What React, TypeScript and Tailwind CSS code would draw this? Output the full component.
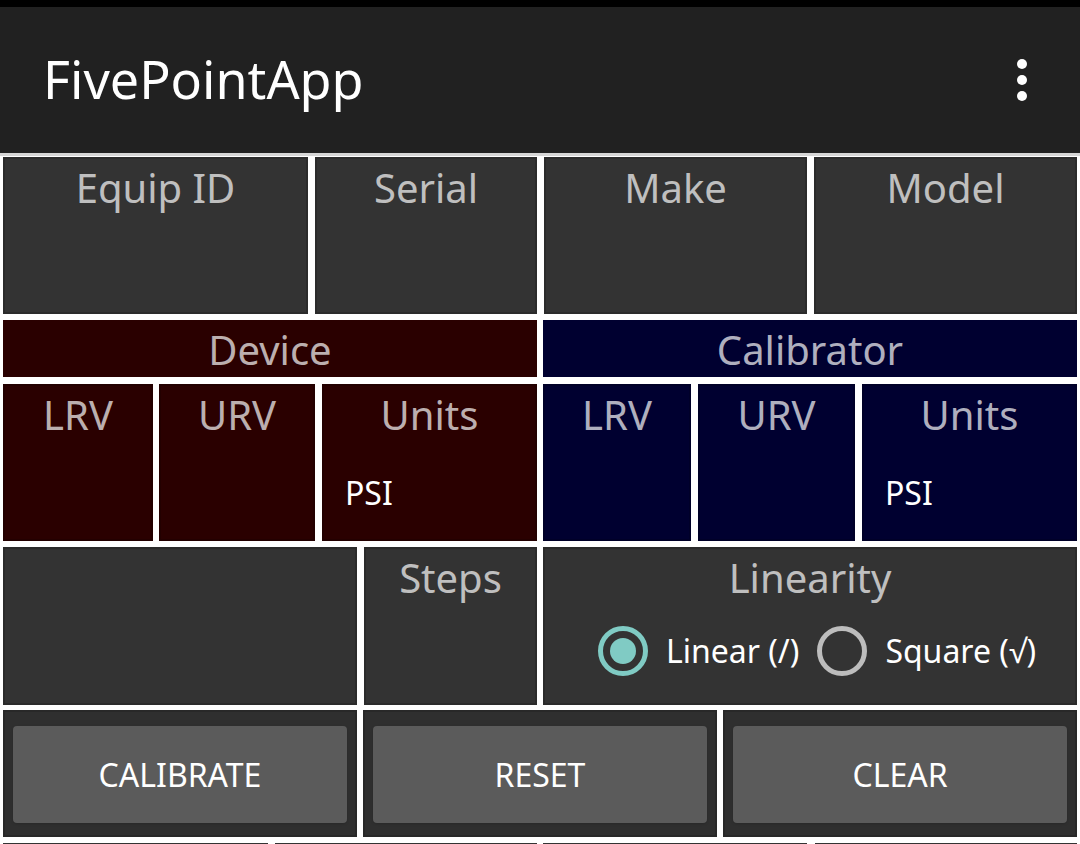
import React from "react";

const font = { fontFamily: '"Noto Sans", "Open Sans", sans-serif' };

const Cell = ({ label, className, value }: { label?: string; className: string; value?: string }) => (
  <div className={`flex flex-col border-2 border-black/15 ${className}`}>
    {label && <div className="pt-[5px] text-center text-[40px] leading-[48px] text-white/70">{label}</div>}
    {value && <div className="mt-[34px] pl-[21px] text-[32px] leading-[40px] text-white">{value}</div>}
  </div>
);

const Radio = ({ checked, label }: { checked?: boolean; label: string }) => (
  <div className="flex items-center">
    <div
      className={`flex h-[50px] w-[50px] items-center justify-center rounded-full border-[5px] ${
        checked ? "border-[#80cbc4]" : "border-[#bdbdbd]"
      }`}
    >
      {checked && <div className="h-[26px] w-[26px] rounded-full bg-[#80cbc4]" />}
    </div>
    <span className="ml-[18px] text-[32px] leading-[40px] text-white">{label}</span>
  </div>
);

const Button = ({ text }: { text: string }) => (
  <div className="flex flex-1 bg-[#2f2f2f] border-2 border-black/15 px-[8px] pt-[14px] pb-[12px]">
    <button className="flex-1 rounded-[4px] bg-[#5b5b5b] text-[32px] text-white shadow-sm">{text}</button>
  </div>
);

export default function App() {
  return (
    <div className="h-[844px] w-[1080px] overflow-hidden bg-white" style={font}>
      <div className="h-[7px] bg-black" />
      <div className="flex h-[146px] items-center justify-between bg-[#212121] pl-[43px] pr-[53px]">
        <h1 className="pb-[2px] text-[52px] leading-[60px] text-white">FivePointApp</h1>
        <div className="flex flex-col gap-[6px]">
          <span className="h-[10px] w-[10px] rounded-full bg-white" />
          <span className="h-[10px] w-[10px] rounded-full bg-white" />
          <span className="h-[10px] w-[10px] rounded-full bg-white" />
        </div>
      </div>
      <div className="h-[3px] bg-[#d6d6d6]" />

      <div className="flex flex-col pt-[1px] pl-[3px] pr-[3px]">
        <div className="flex h-[157px] gap-[7px]">
          <Cell label="Equip ID" className="w-[305px] bg-[#333333]" />
          <Cell label="Serial" className="w-[222px] bg-[#333333]" />
          <Cell label="Make" className="w-[263px] bg-[#333333]" />
          <Cell label="Model" className="flex-1 bg-[#333333]" />
        </div>

        <div className="mt-[6px] flex h-[57px] gap-[6px]">
          <div className="flex flex-1 items-center justify-center bg-[#2a0000] pt-[2px] text-[40px] leading-[48px] text-white/70">
            Device
          </div>
          <div className="flex flex-1 items-center justify-center bg-[#000030] pt-[2px] text-[40px] leading-[48px] text-white/70">
            Calibrator
          </div>
        </div>

        <div className="mt-[7px] flex h-[157px]">
          <Cell label="LRV" className="w-[150px] bg-[#2a0000]" />
          <Cell label="URV" className="ml-[6px] w-[156px] bg-[#2a0000]" />
          <Cell label="Units" value="PSI" className="ml-[7px] w-[215px] bg-[#2a0000]" />
          <Cell label="LRV" className="ml-[6px] w-[148px] bg-[#000030]" />
          <Cell label="URV" className="ml-[7px] w-[157px] bg-[#000030]" />
          <Cell label="Units" value="PSI" className="ml-[7px] flex-1 bg-[#000030]" />
        </div>

        <div className="mt-[6px] flex h-[158px]">
          <Cell className="w-[354px] bg-[#333333]" />
          <Cell label="Steps" className="ml-[7px] w-[173px] bg-[#333333]" />
          <div className="ml-[6px] flex flex-1 flex-col items-center border-2 border-black/15 bg-[#333333]">
            <div className="pt-[5px] text-[40px] leading-[48px] text-white/70">Linearity</div>
            <div className="mt-[24px] ml-[14px] flex items-center gap-[18px]">
              <Radio checked label="Linear (/)" />
              <Radio label="Square (√)" />
            </div>
          </div>
        </div>

        <div className="mt-[5px] flex h-[127px] gap-[6px]">
          <Button text="CALIBRATE" />
          <Button text="RESET" />
          <Button text="CLEAR" />
        </div>

        <div className="mt-[6px] flex h-[40px]">
          <div className="w-[265px] bg-[#333333]" />
          <div className="ml-[7px] w-[262px] bg-[#333333]" />
          <div className="ml-[6px] w-[264px] bg-[#333333]" />
          <div className="ml-[8px] flex-1 bg-[#333333]" />
        </div>
      </div>
    </div>
  );
}
